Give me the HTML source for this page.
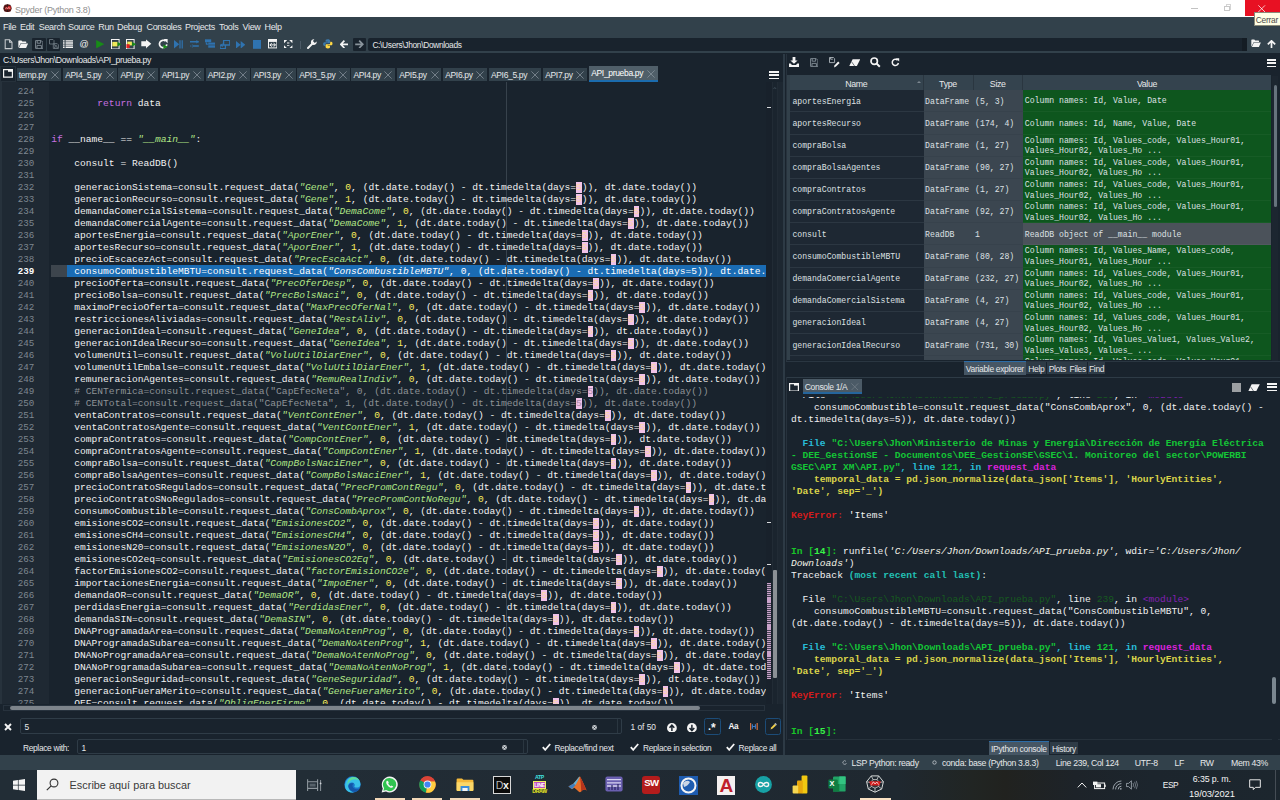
<!DOCTYPE html>
<html><head><meta charset="utf-8"><title>Spyder (Python 3.8)</title>
<style>
*{box-sizing:border-box;margin:0;padding:0}
html,body{width:1280px;height:800px;overflow:hidden;background:#19232D}
body{position:relative;font-family:"Liberation Sans",sans-serif;font-size:8.7px;letter-spacing:-.33px;color:#E0E1E3}
.abs{position:absolute}
.mono{font-family:"Liberation Mono","DejaVu Sans Mono",monospace}
#code,#lnums,.vc,#ctext{letter-spacing:0}
#title{position:absolute;left:0;top:0;width:1280px;height:17px;background:#fff}
#title .t{position:absolute;left:15px;top:3.6px;font-size:9px;color:#909090;line-height:12px;letter-spacing:-.25px}
#menubar{position:absolute;left:0;top:17px;width:1280px;height:19px;background:#32414B}
#menubar span{position:absolute;top:5px;font-size:9px;line-height:11px;color:#E6E8EA;white-space:nowrap}
#toolbar{position:absolute;left:0;top:36px;width:1280px;height:16.6px;background:#32414B}
#pathrow{position:absolute;left:0;top:52.6px;width:786px;height:13.4px;background:#19232D}
#pathrow span{position:absolute;left:3px;top:2.4px;font-size:8.7px;line-height:10px;color:#E6E8EA;white-space:nowrap}
#tabrow{position:absolute;left:0;top:66px;width:783px;height:16px;background:#19232D}
.tab{position:absolute;top:1.5px;height:13.2px;background:#32414B;font-size:8.5px;line-height:14.6px;color:#E6E8EA;white-space:nowrap;padding-left:2.2px}
.tab svg{position:absolute;right:2.6px;top:3px}
.tab.sel{top:0;height:16px;background:#505F69;border-bottom:2px solid #1B6CAE;border-right:none;line-height:15.6px}
.tab.sel svg{top:3.6px}
.tab.sel svg path{stroke:#7F8B94}
/* editor */
#editor{position:absolute;left:0;top:82px;width:783px;height:622px;background:#19232D;overflow:hidden}
#lnarea{position:absolute;left:2.4px;top:0;width:46.6px;height:622px;background:#1F2933;border-left:none}
#lstrip{position:absolute;left:0;top:0;width:2.4px;height:632px;background:#27323C}
#edge{position:absolute;left:506px;top:0;width:1px;height:622px;background:#37424C}
#curline{position:absolute;left:50.6px;top:183.2px;width:17px;height:11.4px;background:#3D454D}
#selbg{position:absolute;left:67.4px;top:183.2px;width:698.2px;height:11.4px;background:#1A6CB4}
#sflag{position:absolute;left:765.6px;top:0;width:6.4px;height:622px;background:#18212B}
#sflags{position:absolute;left:767px;top:500.5px;width:4px;height:96.5px;background:repeating-linear-gradient(#C9A2CA 0,#C9A2CA 1.15px,rgba(201,162,202,.25) 1.15px,rgba(201,162,202,.25) 1.93px)}
#vsb{position:absolute;left:772px;top:0;width:5.8px;height:622px;background:#1A242E;border-left:1px solid #212B35;border-right:1px solid #212B35}
#vgap{position:absolute;left:777.8px;top:0;width:5px;height:622px;background:#1D2731}
#vsbh{position:absolute;left:773px;top:487.5px;width:4px;height:108px;background:#8B9095;border-radius:1px}
#vsplit{position:absolute;left:782.5px;top:54px;width:2.6px;height:701.4px;background:#2D3A45}
#lnums{position:absolute;left:0;top:4px;width:34.4px;text-align:right;font-family:"Liberation Mono",monospace;font-size:9.2px;line-height:12px;color:#7E8790}
#lnums div{height:12px}
#lnums .cur{color:#fff;font-weight:bold}
#code{position:absolute;left:51.2px;top:4px;width:715px;overflow:hidden;font-family:"Liberation Mono",monospace;font-size:9.62px;line-height:12px;color:#F2F2F2;white-space:pre}
.cl{height:12px;white-space:pre}
.k{color:#C670E0}.s{color:#B0E686;font-style:italic}.n{color:#FAED5C}.c{color:#8D9296}
.f{background:#F0C2E8;color:#FAD8A4}
.c .f{color:#A88CA8}
.sel{color:#fff}
.sel .s{color:#fff}

#varexp{position:absolute;left:787px;top:54px;width:493px;height:322px;background:#19232D}
.ham{width:9.4px;height:8.6px;background:linear-gradient(#F4F4F4 0 1.7px,transparent 1.7px 3.4px,#F4F4F4 3.4px 5.1px,transparent 5.1px 6.9px,#F4F4F4 6.9px 8.6px)}
.vh{height:15.2px;background:#34434E;border-right:1px solid #2A3640;text-align:center;font-size:8.8px;line-height:18px;overflow:hidden;color:#E6E8EA}
.sortind{position:absolute;right:2px;top:6px;width:0;height:0;border-left:2px solid transparent;border-right:2px solid transparent;border-bottom:2.4px solid #7C8790}
.vr{position:absolute;left:0;width:481px;height:22.18px}
.vc{position:absolute;top:0;height:22.18px;font-family:"Liberation Mono",monospace;font-size:8.17px;line-height:22.2px;color:#DEE1E4;white-space:pre;overflow:hidden;padding-left:2.4px;padding-top:.4px}
.vn{background:#1E2833;border-bottom:1px solid #2C3742}
.vt{background:#3B4650;border-bottom:1px solid #37424C;padding-left:1.6px}
.vv{border-bottom:1px solid rgba(255,255,255,.04);padding-left:1.8px;padding-top:2px;display:flex;align-items:center}
.vv div{line-height:10.6px}
.btab{position:absolute;height:11.6px;margin-top:1.4px;background:#2E3B46;font-size:8.5px;line-height:14.2px;color:#E6E8EA;text-align:center;white-space:nowrap;overflow:hidden}
.btab.sel{height:14.4px;margin-top:0;background:#465664;border-top:1.6px solid #2B6CA8;line-height:15.4px}
#console{position:absolute;left:787px;top:378px;width:493px;height:378px;background:#19232D}
.ctab{height:15.6px;margin-top:.8px;background:#4B5A66;font-size:8.5px;line-height:16.4px;color:#E6E8EA;padding-left:2.2px;border-bottom:2px solid #25659C;overflow:hidden;white-space:nowrap}
.ctab .x{position:absolute;right:3.6px;top:0;color:#76828C;font-size:9px}
#ctext{position:absolute;left:4px;top:19.3px;width:480px;height:343.8px;overflow:hidden;font-family:"Liberation Mono",monospace;font-size:9.62px;line-height:12px;color:#F2F2F2;white-space:pre}
#ctext .cl{height:12px}
#ctext b{font-weight:bold}
.cc{color:#28BCD8}.cgr{color:#14C636}.cm{color:#DA22DA}.cy{color:#DAD44A}.cr{color:#D41C1C}.cr2{color:#B02828}
.cin{color:#18C428}.cin2{color:#38F048}
.cc2{color:#22C0B4;font-weight:bold}.dg{color:#175A20}.dm{color:#8420B4}.cg{color:#777}
#ctext i{font-style:italic;color:#F2F2E6}

#findbar{position:absolute;left:0;top:704px;width:783px;height:52px;background:#19232D}
.inp{background:#19232D;border:1px solid #2F3C47;border-radius:2px}
.inp span{position:absolute;top:2.6px;font-size:8.4px;line-height:10px;color:#E6E8EA}
.lbl{font-size:8.4px;line-height:10px;color:#E6E8EA;white-space:nowrap}
#status{position:absolute;left:0;top:755.4px;width:1280px;height:14.6px;background:#32414B}
#status span{position:absolute;top:2.4px;font-size:8.7px;letter-spacing:-.3px;line-height:10px;color:#E6E8EA;white-space:nowrap}
#taskbar{position:absolute;left:0;top:770px;width:1280px;height:30px;background:linear-gradient(90deg,#222D36 0,#222D36 25%,#202A33 48%,#1F2830 70%,#212523 76%,#21221F 78.5%,#1D2329 84%,#1C252D 90%,#1C262E 100%)}
.tk{font-size:8.8px;letter-spacing:-.12px;line-height:11px;color:#F4F4F4;white-space:nowrap}
</style></head>
<body>
<div id="title">
<svg class="abs" style="left:2.5px;top:3.8px" width="9" height="8.4" viewBox="0 0 10 10"><ellipse cx="5" cy="5" rx="4.8" ry="4.6" fill="#5E1414"/><path d="M5 .4V9.6M.4 5H9.6M1.7 1.7L8.3 8.3M8.3 1.7L1.7 8.3" stroke="#1c1c1c" stroke-width=".9"/><path d="M2 3.4H5.4V6.8H2Z" fill="#A81C1C"/><path d="M5.4 2.6H8.8V6.4H5.4Z" fill="#E02626"/><path d="M2.6 6L4 4.2L5.2 5.6L6.6 4L8 5.8" stroke="#f4dada" stroke-width=".7" fill="none"/></svg>
<span class="t">Spyder (Python 3.8)</span>
<div class="abs" style="left:1190.6px;top:8px;width:7px;height:1px;background:#C2C2C2"></div>
<div class="abs" style="left:1225.6px;top:4.4px;width:5.6px;height:5.6px;border:1px solid #D4D4D4"></div><div class="abs" style="left:1224.4px;top:5.8px;width:5.6px;height:5.6px;border:1px solid #C8C8C8;background:#fff"></div>
<div class="abs" style="left:1245px;top:0;width:35px;height:16px;background:#E81123"></div>
<svg class="abs" style="left:1258.4px;top:4.6px" width="7.4" height="7.4" viewBox="0 0 10 10"><path d="M.5 .5L9.5 9.5M9.5 .5L.5 9.5" stroke="#fff" stroke-width="1"/></svg>
</div>
<div id="menubar"><span style="left:3px">File</span><span style="left:20px">Edit</span><span style="left:38.75px">Search</span><span style="left:68px">Source</span><span style="left:98.25px">Run</span><span style="left:117px">Debug</span><span style="left:146.5px">Consoles</span><span style="left:185px">Projects</span><span style="left:219px">Tools</span><span style="left:242.5px">View</span><span style="left:264.5px">Help</span></div>
<div id="toolbar"><div class="abs" style="left:32px;top:2px;width:13.5px;height:13.4px;background:#19232D;border-radius:1px"></div><div class="abs" style="left:46.5px;top:2px;width:13.5px;height:13.4px;background:#19232D;border-radius:1px"></div><svg class="abs" style="left:3.5px;top:3.4px" width="9" height="10.4" viewBox="0 0 9 11"><path d="M1 .8H5.6L8.2 3.4V10.2H1Z M5.6 .8V3.4H8.2" fill="none" stroke="#C9CDD0" stroke-width="1.1"/></svg><svg class="abs" style="left:17.5px;top:4.2px" width="10.4" height="8.4" viewBox="0 0 11 9"><path d="M.3 8.5V1.2Q.3 .5 1 .5H3.6L4.6 1.6H8.2Q8.8 1.6 8.8 2.3V3.2H3L.3 8.5Z M3.3 3.8H10.8L8.6 8.6H.9Z" fill="#F4F4F4"/></svg><svg class="abs" style="left:34.5px;top:3.7px" width="8.5" height="9" viewBox="0 0 8.5 9"><path d="M.6 .6H6.2L7.9 2.3V8.4H.6Z M2.2 .6V3.2H5.6V.6 M2 8.4V5.4H6.4V8.4" fill="none" stroke="#7C8790" stroke-width="1"/></svg><svg class="abs" style="left:48.5px;top:3.2px" width="10" height="10" viewBox="0 0 10 10"><path d="M.5 .5H4L5 1.5V5H.5Z M4.3 4.6H8.2L9.4 5.8V9.5H4.3Z M5.6 4.6V6.4H7.8 M5.6 9.5V7.8H8.2V9.5" fill="none" stroke="#6C7780" stroke-width=".9"/></svg><svg class="abs" style="left:63px;top:4.2px" width="10.2" height="8" viewBox="0 0 10.2 8"><path d="M0 .9H1.6M2.6 .9H10.2M0 3H1.6M2.6 3H10.2M0 5.1H1.6M2.6 5.1H10.2M0 7.2H1.6M2.6 7.2H10.2" stroke="#F4F4F4" stroke-width="1.4"/></svg><span class="abs" style="left:79.6px;top:2.4px;font-size:9px;letter-spacing:0;line-height:12px;color:#F4F4F4">@</span><svg class="abs" style="left:95.5px;top:4.0px" width="8.5" height="8.4" viewBox="0 0 8.5 8.4"><path d="M.2 0L8.2 4.2L.2 8.4Z" fill="#178C17"/></svg><svg class="abs" style="left:110.8px;top:2.7px" width="11" height="10.5" viewBox="0 0 11 10.5"><rect x=".5" y=".5" width="7.6" height="9.5" fill="none" stroke="#F4F4F4" stroke-width="1"/><rect x="1.3" y="2.9" width="5.2" height="4.5" fill="#EEE85A"/><path d="M6.6 2.9L10.4 5.2L6.6 7.5Z" fill="#178C17"/></svg><svg class="abs" style="left:125.8px;top:2.7px" width="11" height="10.5" viewBox="0 0 11 10.5"><rect x=".5" y=".5" width="7.6" height="9.5" fill="none" stroke="#F4F4F4" stroke-width="1"/><rect x="1.3" y="2.6" width="4.6" height="3.8" fill="#EEE85A"/><rect x=".4" y="5.2" width="3.2" height="3.8" fill="#E02020"/><path d="M6.2 2.9L10.2 5.2L6.2 7.5Z" fill="#178C17"/></svg><svg class="abs" style="left:141.3px;top:3.2px" width="10.5" height="10" viewBox="0 0 10.5 10"><path d="M.3 2.3H5V.4L10.3 4.8L5 9.2V7.3H.3Z" fill="#F4F4F4"/><path d="M5 9.8H5.2" stroke="#ccc"/></svg><svg class="abs" style="left:157.8px;top:3.2px" width="10.5" height="10" viewBox="0 0 10.5 10"><path d="M7.6 2.2A3.7 3.7 0 1 0 8.8 5.4" fill="none" stroke="#F4F4F4" stroke-width="1.7"/><path d="M5.5 .1H9.6V4.2Z" fill="#F4F4F4"/><path d="M5.4 5.6L9.8 7.8L5.4 10Z" fill="#178C17"/></svg><svg class="abs" style="left:173.8px;top:4.2px" width="9" height="8.6" viewBox="0 0 9 8.6"><path d="M0 0L5.2 4.3L0 8.6Z M5.4 .2H6.6V8.4H5.4Z M7.6 .2H8.8V8.4H7.6Z" fill="#2F73B0"/></svg><svg class="abs" style="left:189.5px;top:4.2px" width="9" height="8" viewBox="0 0 9 8"><path d="M0 1H8.8V2.6H0Z M0 5.2H8.8V6.8H0Z M6.4 0L9 1.8L6.4 3.6Z M2.6 4.2L0 6L2.6 7.8Z" fill="#2F73B0"/></svg><svg class="abs" style="left:204.8px;top:3.2px" width="10.5" height="9.5" viewBox="0 0 10.5 9.5"><path d="M0 .4H6V3H0Z M3.4 3.8H10.4V5.6H3.4Z M3.4 6.6H10.4V8.4H3.4Z M1 3V5.6H3.4" fill="#2F73B0" stroke="#2F73B0" stroke-width=".4"/></svg><svg class="abs" style="left:220px;top:3.8px" width="10" height="9" viewBox="0 0 10 9"><path d="M3.6 .4H9.8V5H3.6Z M0 5.2H5.4V8.6H0Z" fill="none" stroke="#2F73B0" stroke-width="1.3"/><path d="M2.6 3.2L.2 5.2L2.6 7.2Z" fill="#2F73B0"/></svg><svg class="abs" style="left:236px;top:4.6px" width="9.4" height="7.6" viewBox="0 0 9.4 7.6"><path d="M0 0L4.6 3.8L0 7.6Z M4.7 0L9.3 3.8L4.7 7.6Z" fill="#2F73B0"/></svg><svg class="abs" style="left:252.6px;top:3.8px" width="8.6" height="8.8" viewBox="0 0 8.6 8.8"><rect x="0" y="0" width="8.6" height="8.8" fill="#2F73B0"/></svg><svg class="abs" style="left:268px;top:3.4px" width="9.4" height="9.4" viewBox="0 0 9.4 9.4"><rect x=".5" y=".5" width="8.4" height="8.4" fill="none" stroke="#F4F4F4" stroke-width="1"/><rect x=".5" y=".5" width="8.4" height="2.4" fill="#F4F4F4"/><path d="M2 5.9H7.4M5.6 4.2L7.6 5.9L5.6 7.6M3.8 4.2L1.8 5.9L3.8 7.6" stroke="#F4F4F4" stroke-width="1" fill="none"/></svg><svg class="abs" style="left:284.4px;top:3.8px" width="8.4" height="8.4" viewBox="0 0 8.4 8.4"><path d="M0 0H3.2L0 3.2Z M8.4 0V3.2L5.2 0Z M0 8.4V5.2L3.2 8.4Z M8.4 8.4H5.2L8.4 5.2Z M3 2.6H5.4V3.4H3Z M3 5H5.4V5.8H3Z" fill="#F4F4F4"/></svg><div class="abs" style="left:300px;top:5px;width:1px;height:8px;background:#4C5A66"></div><svg class="abs" style="left:307.4px;top:3.2px" width="10" height="10" viewBox="0 0 10 10"><path d="M1 9L6 4" stroke="#F4F4F4" stroke-width="2" stroke-linecap="round"/><path d="M9.6 2.4A2.9 2.9 0 1 1 7.4 .3L5.9 2L7.8 4L9.6 2.4Z" fill="#F4F4F4"/></svg><svg class="abs" style="left:323px;top:3.2px" width="9.6" height="9.6" viewBox="0 0 9.6 9.6"><path d="M4.7 .2C2.8 .2 2.6 1 2.6 1.6V2.8H4.9V3.3H1.4C.5 3.3 .1 4.2 .1 5.1C.1 6.1 .5 6.9 1.4 6.9H2.4V5.6C2.4 4.8 3 4.3 3.8 4.3H6C6.6 4.3 7 3.8 7 3.2V1.6C7 .8 6.3 .2 4.7 .2Z" fill="#3C78AA"/><path d="M4.9 9.4C6.8 9.4 7 8.6 7 8V6.8H4.7V6.3H8.2C9.1 6.3 9.5 5.4 9.5 4.5C9.5 3.5 9.1 2.7 8.2 2.7H7.2V4C7.2 4.8 6.6 5.3 5.8 5.3H3.6C3 5.3 2.6 5.8 2.6 6.4V8C2.6 8.8 3.3 9.4 4.9 9.4Z" fill="#FFD845"/></svg><svg class="abs" style="left:339.8px;top:3.8px" width="8.6" height="8.6" viewBox="0 0 8.6 8.6"><path d="M4.4 .6L.8 4.3L4.4 8M1 4.3H8.4" stroke="#F4F4F4" stroke-width="1.7" fill="none"/></svg><div class="abs" style="left:352.5px;top:2px;width:13.5px;height:13.4px;background:#19232D;border-radius:1px"></div><svg class="abs" style="left:355px;top:3.8px" width="8.6" height="8.6" viewBox="0 0 8.6 8.6"><path d="M4.2 .6L7.8 4.3L4.2 8M7.6 4.3H.2" stroke="#8A949C" stroke-width="1.7" fill="none"/></svg><div class="abs" style="left:367.5px;top:1.5px;width:879.5px;height:13.8px;background:#19232D;border-radius:2px"></div><div class="abs" style="left:1242px;top:2px;width:5px;height:13px;background:#141C24"></div><span class="abs" style="left:372.4px;top:3.6px;font-size:8.4px;line-height:10px;color:#E6E8EA;white-space:nowrap">C:\Users\Jhon\Downloads</span><svg class="abs" style="left:1250.5px;top:3.4px" width="10" height="8.2" viewBox="0 0 10 8.2"><path d="M.3 7.8V1.1Q.3 .4 1 .4H3.3L4.2 1.4H7.4Q8 1.4 8 2.1V2.9H2.8L.3 7.8Z M3 3.5H9.9L7.9 7.9H.8Z" fill="#F4F4F4"/></svg><svg class="abs" style="left:1267px;top:3.8px" width="9" height="8.4" viewBox="0 0 9 8.4"><path d="M.8 4.4L4.5 .8L8.2 4.4M4.5 1V8.4" stroke="#F4F4F4" stroke-width="1.7" fill="none"/></svg></div>
<div id="pathrow"><span>C:\Users\Jhon\Downloads\API_prueba.py</span></div>
<div id="tabrow"><div class="abs" style="left:0;top:0;width:16.4px;height:15.6px;background:#19232D;border:1px solid #26313B"></div><svg class="abs" style="left:3px;top:3.4px" width="10" height="9" viewBox="0 0 10 9"><path d="M.6 .6H9.4V8.2H.6Z" fill="none" stroke="#F4F4F4" stroke-width="1.2"/><path d="M5 .6H9.4V2.8H5Z" fill="#F4F4F4"/></svg><div class="tab" style="left:16.50px;width:44.75px">temp.py<svg width="8" height="8" viewBox="0 0 8 8"><path d="M.4 .4L7.6 7.6M7.6 .4L.4 7.6" stroke="#7A8690" stroke-width=".9"/></svg></div><div class="tab" style="left:63.00px;width:53.50px">API4_5.py<svg width="8" height="8" viewBox="0 0 8 8"><path d="M.4 .4L7.6 7.6M7.6 .4L.4 7.6" stroke="#7A8690" stroke-width=".9"/></svg></div><div class="tab" style="left:118.25px;width:39.75px">API.py<svg width="8" height="8" viewBox="0 0 8 8"><path d="M.4 .4L7.6 7.6M7.6 .4L.4 7.6" stroke="#7A8690" stroke-width=".9"/></svg></div><div class="tab" style="left:159.50px;width:44.25px">API1.py<svg width="8" height="8" viewBox="0 0 8 8"><path d="M.4 .4L7.6 7.6M7.6 .4L.4 7.6" stroke="#7A8690" stroke-width=".9"/></svg></div><div class="tab" style="left:205.50px;width:44.00px">API2.py<svg width="8" height="8" viewBox="0 0 8 8"><path d="M.4 .4L7.6 7.6M7.6 .4L.4 7.6" stroke="#7A8690" stroke-width=".9"/></svg></div><div class="tab" style="left:251.25px;width:44.25px">API3.py<svg width="8" height="8" viewBox="0 0 8 8"><path d="M.4 .4L7.6 7.6M7.6 .4L.4 7.6" stroke="#7A8690" stroke-width=".9"/></svg></div><div class="tab" style="left:297.00px;width:52.50px">API3_5.py<svg width="8" height="8" viewBox="0 0 8 8"><path d="M.4 .4L7.6 7.6M7.6 .4L.4 7.6" stroke="#7A8690" stroke-width=".9"/></svg></div><div class="tab" style="left:351.25px;width:43.75px">API4.py<svg width="8" height="8" viewBox="0 0 8 8"><path d="M.4 .4L7.6 7.6M7.6 .4L.4 7.6" stroke="#7A8690" stroke-width=".9"/></svg></div><div class="tab" style="left:397.00px;width:44.25px">API5.py<svg width="8" height="8" viewBox="0 0 8 8"><path d="M.4 .4L7.6 7.6M7.6 .4L.4 7.6" stroke="#7A8690" stroke-width=".9"/></svg></div><div class="tab" style="left:443.00px;width:44.00px">API6.py<svg width="8" height="8" viewBox="0 0 8 8"><path d="M.4 .4L7.6 7.6M7.6 .4L.4 7.6" stroke="#7A8690" stroke-width=".9"/></svg></div><div class="tab" style="left:488.75px;width:52.50px">API6_5.py<svg width="8" height="8" viewBox="0 0 8 8"><path d="M.4 .4L7.6 7.6M7.6 .4L.4 7.6" stroke="#7A8690" stroke-width=".9"/></svg></div><div class="tab" style="left:543.00px;width:44.00px">API7.py<svg width="8" height="8" viewBox="0 0 8 8"><path d="M.4 .4L7.6 7.6M7.6 .4L.4 7.6" stroke="#7A8690" stroke-width=".9"/></svg></div><div class="tab sel" style="left:589.00px;width:69.00px">API_prueba.py<svg width="8" height="8" viewBox="0 0 8 8"><path d="M.4 .4L7.6 7.6M7.6 .4L.4 7.6" stroke="#7A8690" stroke-width=".9"/></svg></div><div class="abs ham" style="left:769px;top:4.6px;width:10px"></div></div>
<div id="editor"><div id="lnarea"></div><div id="lstrip"></div>
<div id="curline"></div><div id="selbg"></div><div id="edge"></div>
<div id="sflag"></div>
<div class="abs" style="left:767px;top:25px;width:3.6px;height:1.2px;background:#D8DADC"></div>
<div class="abs" style="left:767px;top:481.8px;width:3.6px;height:1.2px;background:#D8DADC"></div>
<div class="abs" style="left:767px;top:440px;width:3.6px;height:1.2px;background:#D8DADC"></div>
<div id="sflags"></div>
<div id="vsb"></div><div id="vgap"></div><div id="vsbh"></div>
<svg class="abs" style="left:773.4px;top:4.6px" width="3.6" height="2.6" viewBox="0 0 3.6 2.6"><path d="M.2 2.4L1.8 .4L3.4 2.4" stroke="#4A5863" stroke-width=".7" fill="none"/></svg>
<div id="lnums"><div>224</div><div>225</div><div>226</div><div>227</div><div>228</div><div>229</div><div>230</div><div>231</div><div>232</div><div>233</div><div>234</div><div>235</div><div>236</div><div>237</div><div>238</div><div class="cur">239</div><div>240</div><div>241</div><div>242</div><div>243</div><div>244</div><div>245</div><div>246</div><div>247</div><div>248</div><div>249</div><div>250</div><div>251</div><div>252</div><div>253</div><div>254</div><div>255</div><div>256</div><div>257</div><div>258</div><div>259</div><div>260</div><div>261</div><div>262</div><div>263</div><div>264</div><div>265</div><div>266</div><div>267</div><div>268</div><div>269</div><div>270</div><div>271</div><div>272</div><div>273</div><div>274</div><div>275</div></div>
<div id="code"><div class="cl"></div><div class="cl">        <span class="k">return</span> data</div><div class="cl"></div><div class="cl"></div><div class="cl"><span class="k">if</span> __name__ == <span class="s">"__main__"</span>:</div><div class="cl"></div><div class="cl">    consult = ReadDB()</div><div class="cl"></div><div class="cl">    generacionSistema=consult.request_data(<span class="s">"Gene"</span>, <span class="n">0</span>, (dt.date.today() - dt.timedelta(days=<span class="f">5</span>)), dt.date.today())</div><div class="cl">    generacionRecurso=consult.request_data(<span class="s">"Gene"</span>, <span class="n">1</span>, (dt.date.today() - dt.timedelta(days=<span class="f">5</span>)), dt.date.today())</div><div class="cl">    demandaComercialSistema=consult.request_data(<span class="s">"DemaCome"</span>, <span class="n">0</span>, (dt.date.today() - dt.timedelta(days=<span class="f">5</span>)), dt.date.today())</div><div class="cl">    demandaComercialAgente=consult.request_data(<span class="s">"DemaCome"</span>, <span class="n">1</span>, (dt.date.today() - dt.timedelta(days=<span class="f">5</span>)), dt.date.today())</div><div class="cl">    aportesEnergia=consult.request_data(<span class="s">"AporEner"</span>, <span class="n">0</span>, (dt.date.today() - dt.timedelta(days=<span class="f">5</span>)), dt.date.today())</div><div class="cl">    aportesRecurso=consult.request_data(<span class="s">"AporEner"</span>, <span class="n">1</span>, (dt.date.today() - dt.timedelta(days=<span class="f">5</span>)), dt.date.today())</div><div class="cl">    precioEscacezAct=consult.request_data(<span class="s">"PrecEscaAct"</span>, <span class="n">0</span>, (dt.date.today() - dt.timedelta(days=<span class="f">5</span>)), dt.date.today())</div><div class="cl">   <span class="sel"> consumoCombustibleMBTU=consult.request_data(<span class="s">"ConsCombustibleMBTU"</span>, 0, (dt.date.today() - dt.timedelta(days=5)), dt.date.today())</span></div><div class="cl">    precioOferta=consult.request_data(<span class="s">"PrecOferDesp"</span>, <span class="n">0</span>, (dt.date.today() - dt.timedelta(days=<span class="f">5</span>)), dt.date.today())</div><div class="cl">    precioBolsa=consult.request_data(<span class="s">"PrecBolsNaci"</span>, <span class="n">0</span>, (dt.date.today() - dt.timedelta(days=<span class="f">5</span>)), dt.date.today())</div><div class="cl">    maximoPrecioOferta=consult.request_data(<span class="s">"MaxPrecOferNal"</span>, <span class="n">0</span>, (dt.date.today() - dt.timedelta(days=<span class="f">5</span>)), dt.date.today())</div><div class="cl">    restriccionesAliviadas=consult.request_data(<span class="s">"RestAliv"</span>, <span class="n">0</span>, (dt.date.today() - dt.timedelta(days=<span class="f">5</span>)), dt.date.today())</div><div class="cl">    generacionIdeal=consult.request_data(<span class="s">"GeneIdea"</span>, <span class="n">0</span>, (dt.date.today() - dt.timedelta(days=<span class="f">5</span>)), dt.date.today())</div><div class="cl">    generacionIdealRecurso=consult.request_data(<span class="s">"GeneIdea"</span>, <span class="n">1</span>, (dt.date.today() - dt.timedelta(days=<span class="f">5</span>)), dt.date.today())</div><div class="cl">    volumenUtil=consult.request_data(<span class="s">"VoluUtilDiarEner"</span>, <span class="n">0</span>, (dt.date.today() - dt.timedelta(days=<span class="f">5</span>)), dt.date.today())</div><div class="cl">    volumenUtilEmbalse=consult.request_data(<span class="s">"VoluUtilDiarEner"</span>, <span class="n">1</span>, (dt.date.today() - dt.timedelta(days=<span class="f">5</span>)), dt.date.today())</div><div class="cl">    remuneracionAgentes=consult.request_data(<span class="s">"RemuRealIndiv"</span>, <span class="n">0</span>, (dt.date.today() - dt.timedelta(days=<span class="f">5</span>)), dt.date.today())</div><div class="cl">    <span class="c"># CENTermica=consult.request_data("CapEfecNeta", 0, (dt.date.today() - dt.timedelta(days=<span class="f">5</span>)), dt.date.today())</span></div><div class="cl">    <span class="c"># CENTotal=consult.request_data("CapEfecNeta", 1, (dt.date.today() - dt.timedelta(days=<span class="f">5</span>)), dt.date.today())</span></div><div class="cl">    ventaContratos=consult.request_data(<span class="s">"VentContEner"</span>, <span class="n">0</span>, (dt.date.today() - dt.timedelta(days=<span class="f">5</span>)), dt.date.today())</div><div class="cl">    ventaContratosAgente=consult.request_data(<span class="s">"VentContEner"</span>, <span class="n">1</span>, (dt.date.today() - dt.timedelta(days=<span class="f">5</span>)), dt.date.today())</div><div class="cl">    compraContratos=consult.request_data(<span class="s">"CompContEner"</span>, <span class="n">0</span>, (dt.date.today() - dt.timedelta(days=<span class="f">5</span>)), dt.date.today())</div><div class="cl">    compraContratosAgente=consult.request_data(<span class="s">"CompContEner"</span>, <span class="n">1</span>, (dt.date.today() - dt.timedelta(days=<span class="f">5</span>)), dt.date.today())</div><div class="cl">    compraBolsa=consult.request_data(<span class="s">"CompBolsNaciEner"</span>, <span class="n">0</span>, (dt.date.today() - dt.timedelta(days=<span class="f">5</span>)), dt.date.today())</div><div class="cl">    compraBolsaAgentes=consult.request_data(<span class="s">"CompBolsNaciEner"</span>, <span class="n">1</span>, (dt.date.today() - dt.timedelta(days=<span class="f">5</span>)), dt.date.today())</div><div class="cl">    precioContratoSRegulados=consult.request_data(<span class="s">"PrecPromContRegu"</span>, <span class="n">0</span>, (dt.date.today() - dt.timedelta(days=<span class="f">5</span>)), dt.date.today())</div><div class="cl">    precioContratoSNoRegulados=consult.request_data(<span class="s">"PrecPromContNoRegu"</span>, <span class="n">0</span>, (dt.date.today() - dt.timedelta(days=<span class="f">5</span>)), dt.date.today())</div><div class="cl">    consumoCombustible=consult.request_data(<span class="s">"ConsCombAprox"</span>, <span class="n">0</span>, (dt.date.today() - dt.timedelta(days=<span class="f">5</span>)), dt.date.today())</div><div class="cl">    emisionesCO2=consult.request_data(<span class="s">"EmisionesCO2"</span>, <span class="n">0</span>, (dt.date.today() - dt.timedelta(days=<span class="f">5</span>)), dt.date.today())</div><div class="cl">    emisionesCH4=consult.request_data(<span class="s">"EmisionesCH4"</span>, <span class="n">0</span>, (dt.date.today() - dt.timedelta(days=<span class="f">5</span>)), dt.date.today())</div><div class="cl">    emisionesN20=consult.request_data(<span class="s">"EmisionesN2O"</span>, <span class="n">0</span>, (dt.date.today() - dt.timedelta(days=<span class="f">5</span>)), dt.date.today())</div><div class="cl">    emisionesCO2eq=consult.request_data(<span class="s">"EmisionesCO2Eq"</span>, <span class="n">0</span>, (dt.date.today() - dt.timedelta(days=<span class="f">5</span>)), dt.date.today())</div><div class="cl">    factorEmisionesCO2=consult.request_data(<span class="s">"factorEmisionCO2e"</span>, <span class="n">0</span>, (dt.date.today() - dt.timedelta(days=<span class="f">5</span>)), dt.date.today())</div><div class="cl">    importacionesEnergia=consult.request_data(<span class="s">"ImpoEner"</span>, <span class="n">0</span>, (dt.date.today() - dt.timedelta(days=<span class="f">5</span>)), dt.date.today())</div><div class="cl">    demandaOR=consult.request_data(<span class="s">"DemaOR"</span>, <span class="n">0</span>, (dt.date.today() - dt.timedelta(days=<span class="f">5</span>)), dt.date.today())</div><div class="cl">    perdidasEnergia=consult.request_data(<span class="s">"PerdidasEner"</span>, <span class="n">0</span>, (dt.date.today() - dt.timedelta(days=<span class="f">5</span>)), dt.date.today())</div><div class="cl">    demandaSIN=consult.request_data(<span class="s">"DemaSIN"</span>, <span class="n">0</span>, (dt.date.today() - dt.timedelta(days=<span class="f">5</span>)), dt.date.today())</div><div class="cl">    DNAProgramadaArea=consult.request_data(<span class="s">"DemaNoAtenProg"</span>, <span class="n">0</span>, (dt.date.today() - dt.timedelta(days=<span class="f">5</span>)), dt.date.today())</div><div class="cl">    DNAProgramadaSubarea=consult.request_data(<span class="s">"DemaNoAtenProg"</span>, <span class="n">1</span>, (dt.date.today() - dt.timedelta(days=<span class="f">5</span>)), dt.date.today())</div><div class="cl">    DNANoProgramadaArea=consult.request_data(<span class="s">"DemaNoAtenNoProg"</span>, <span class="n">0</span>, (dt.date.today() - dt.timedelta(days=<span class="f">5</span>)), dt.date.today())</div><div class="cl">    DNANoProgramadaSubarea=consult.request_data(<span class="s">"DemaNoAtenNoProg"</span>, <span class="n">1</span>, (dt.date.today() - dt.timedelta(days=<span class="f">5</span>)), dt.date.today())</div><div class="cl">    generacionSeguridad=consult.request_data(<span class="s">"GeneSeguridad"</span>, <span class="n">0</span>, (dt.date.today() - dt.timedelta(days=<span class="f">5</span>)), dt.date.today())</div><div class="cl">    generacionFueraMerito=consult.request_data(<span class="s">"GeneFueraMerito"</span>, <span class="n">0</span>, (dt.date.today() - dt.timedelta(days=<span class="f">5</span>)), dt.date.today())</div><div class="cl">    OEF=consult.request_data(<span class="s">"ObligEnerFirme"</span>, <span class="n">0</span>, (dt.date.today() - dt.timedelta(days=<span class="f">5</span>)), dt.date.today())</div></div></div>
<div id="vsplit"></div>
<div id="findbar"><div class="abs" style="left:3px;top:1px;width:762px;height:5.6px;background:#19232D;border:1px solid #27323D"></div><div class="abs" style="left:10px;top:2px;width:690px;height:3.6px;background:#7D848B;border-radius:2px"></div><svg class="abs" style="left:4.4px;top:19px" width="8" height="8" viewBox="0 0 8 8"><path d="M1 1L7 7M7 1L1 7" stroke="#F4F4F4" stroke-width="1.9"/></svg><div class="abs inp" style="left:20px;top:14.4px;width:602px;height:15.4px"><span style="left:3.4px">5</span></div><div class="abs" style="left:616.6px;top:15.4px;width:1px;height:13.4px;background:#2A3640"></div><svg class="abs" style="left:591.5px;top:20.6px" width="5" height="5" viewBox="0 0 5 5"><circle cx="2.5" cy="2.5" r="2.4" fill="#C8CCD0"/><path d="M1.5 1.5L3.5 3.5M3.5 1.5L1.5 3.5" stroke="#19232D" stroke-width=".7"/></svg><span class="abs lbl" style="left:630.4px;top:18px;letter-spacing:0">1 of 50</span><svg class="abs" style="left:667px;top:18.6px" width="9.8" height="9.8" viewBox="0 0 9.8 9.8"><circle cx="4.9" cy="4.9" r="4.9" fill="#F4F4F4"/><path d="M4.9 8V2.4M2.5 4.7L4.9 2.2L7.3 4.7" stroke="#19232D" stroke-width="1.5" fill="none"/></svg><svg class="abs" style="left:687.2px;top:18.6px" width="9.8" height="9.8" viewBox="0 0 9.8 9.8"><circle cx="4.9" cy="4.9" r="4.9" fill="#F4F4F4"/><path d="M4.9 1.8V7.4M2.5 5.1L4.9 7.6L7.3 5.1" stroke="#19232D" stroke-width="1.5" fill="none"/></svg><div class="abs" style="left:704px;top:14.4px;width:17px;height:16.4px;border:1px solid #1C4C78;border-radius:2.5px;background:#19232D"></div><span class="abs" style="left:708px;top:17.4px;font-size:11px;line-height:10px;color:#F4F4F4;font-weight:bold">.</span><span class="abs" style="left:711px;top:18.2px;font-size:12px;line-height:12px;color:#F4F4F4;font-weight:bold">*</span><span class="abs" style="left:728.4px;top:18.4px;font-size:8.2px;line-height:10px;color:#F4F4F4;font-weight:bold;letter-spacing:-.2px">Aa</span><svg class="abs" style="left:749.8px;top:19.4px" width="7.8" height="7" viewBox="0 0 7.8 7"><path d="M.6 0V7M7.2 0V7" stroke="#D07040" stroke-width="1.2"/><path d="M2.4 1.2V5.8M5.4 1.2V5.8M2.4 3.5H5.4" stroke="#3C7CC8" stroke-width="1.1" fill="none"/></svg><div class="abs" style="left:765.4px;top:14.4px;width:16px;height:16.4px;border:1px solid #1C4C78;border-radius:2.5px;background:#19232D"></div><svg class="abs" style="left:770px;top:19.4px" width="6.8" height="6.8" viewBox="0 0 8 8"><path d="M.6 7.6L1.6 5L5.4 1.2L7 2.8L3.2 6.6Z" fill="#F2D04A"/><path d="M5.2 .8L6.4 0L8 1.6L7.2 2.8Z" fill="#C8CCD0"/></svg><span class="abs lbl" style="left:23px;top:38.6px">Replace with:</span><div class="abs inp" style="left:77px;top:35px;width:451px;height:15px"><span style="left:3.6px">1</span></div><div class="abs" style="left:522.6px;top:36px;width:1px;height:13px;background:#2A3640"></div><svg class="abs" style="left:501.6px;top:41px" width="5" height="5" viewBox="0 0 5 5"><circle cx="2.5" cy="2.5" r="2.4" fill="#C8CCD0"/><path d="M1.5 1.5L3.5 3.5M3.5 1.5L1.5 3.5" stroke="#19232D" stroke-width=".7"/></svg><svg class="abs" style="left:541.6px;top:39.4px" width="9" height="8" viewBox="0 0 9 8"><path d="M.8 4.2L3.2 6.8L8.2 1" stroke="#F4F4F4" stroke-width="1.8" fill="none"/></svg><span class="abs lbl" style="left:554.4px;top:38.6px">Replace/find next</span><svg class="abs" style="left:629.8px;top:39.4px" width="9" height="8" viewBox="0 0 9 8"><path d="M.8 4.2L3.2 6.8L8.2 1" stroke="#F4F4F4" stroke-width="1.8" fill="none"/></svg><span class="abs lbl" style="left:643px;top:38.6px">Replace in selection</span><svg class="abs" style="left:725.8px;top:39.4px" width="9" height="8" viewBox="0 0 9 8"><path d="M.8 4.2L3.2 6.8L8.2 1" stroke="#F4F4F4" stroke-width="1.8" fill="none"/></svg><span class="abs lbl" style="left:738.6px;top:38.6px">Replace all</span></div>
<div id="varexp"><div class="abs" style="left:-1px;top:0;width:1px;height:308px;background:#27323D"></div><div class="abs" style="left:-1px;top:307px;width:494px;height:1px;background:#2A3641"></div><svg class="abs" style="left:1.5px;top:3.4px" width="10" height="10" viewBox="0 0 10 10"><path d="M3.6 0H6.4V3.4H8.6L5 6.8L1.4 3.4H3.6Z M0 6.6H1.6L3 8H7L8.4 6.6H10V10H0Z" fill="#F4F4F4"/></svg><svg class="abs" style="left:22.6px;top:3.9px" width="8.5" height="9" viewBox="0 0 8.5 9"><path d="M.6 .6H6.2L7.9 2.3V8.4H.6Z M2.2 .6V3.2H5.6V.6 M2 8.4V5.4H6.4V8.4" fill="none" stroke="#7C8790" stroke-width="1"/></svg><svg class="abs" style="left:41.5px;top:2.5px" width="11" height="11" viewBox="0 0 11 11"><path d="M.5 .5H4.4L5.6 1.7V5.6H.5Z M1.6 .5V2.2H3.8" fill="none" stroke="#AEB5BB" stroke-width=".9"/><path d="M5 10.4L5.6 8.2L9.2 4.6L10.6 6L7 9.6Z" fill="#F4F4F4"/></svg><svg class="abs" style="left:61.5px;top:4.9px" width="11.5" height="7.5" viewBox="0 0 11.5 7.5"><path d="M3.6 .2H11.3L7.8 7.2H.2Z" fill="#F4F4F4"/><path d="M2.6 2.8L5.6 7" stroke="#19232D" stroke-width=".6"/></svg><svg class="abs" style="left:83.4px;top:3.3px" width="10.5" height="10.5" viewBox="0 0 10.5 10.5"><circle cx="4.2" cy="4.2" r="3.2" fill="none" stroke="#F4F4F4" stroke-width="1.7"/><path d="M6.4 6.4L9.8 9.8" stroke="#F4F4F4" stroke-width="2"/></svg><svg class="abs" style="left:104.2px;top:4.1px" width="8.4" height="8.6" viewBox="0 0 8.4 8.6"><path d="M6.6 2.2A3.1 3.1 0 1 0 7.4 5" fill="none" stroke="#F4F4F4" stroke-width="1.5"/><path d="M4.8 .2H8.2V3.6Z" fill="#F4F4F4"/></svg><div class="abs ham" style="left:480px;top:4.6px"></div><div class="abs" style="left:0;top:21px;width:3.4px;height:284.6px;background:#32404A"></div><div class="abs vh" style="left:3px;top:21px;width:133.5px">Name<i class="sortind"></i></div><div class="abs vh" style="left:136.5px;top:21px;width:50px">Type</div><div class="abs vh" style="left:186.5px;top:21px;width:49.5px">Size</div><div class="abs vh" style="left:236px;top:21px;width:248px;border-right:none">Value</div><div class="abs" id="vrows" style="left:3px;top:36.2px;width:481px;height:269.6px;overflow:hidden"><div class="vr" style="top:0.00px"><div class="vc vn" style="left:0;width:133.5px">aportesEnergia</div><div class="vc vt" style="left:133.5px;width:50px">DataFrame</div><div class="vc vt" style="left:183.5px;width:49.5px">(5, 3)</div><div class="vc vv" style="left:233px;width:248px;background:#0E561E"><div>Column names: Id, Value, Date</div></div></div><div class="vr" style="top:22.18px"><div class="vc vn" style="left:0;width:133.5px">aportesRecurso</div><div class="vc vt" style="left:133.5px;width:50px">DataFrame</div><div class="vc vt" style="left:183.5px;width:49.5px">(174, 4)</div><div class="vc vv" style="left:233px;width:248px;background:#0E561E"><div>Column names: Id, Name, Value, Date</div></div></div><div class="vr" style="top:44.36px"><div class="vc vn" style="left:0;width:133.5px">compraBolsa</div><div class="vc vt" style="left:133.5px;width:50px">DataFrame</div><div class="vc vt" style="left:183.5px;width:49.5px">(1, 27)</div><div class="vc vv" style="left:233px;width:248px;background:#0E561E"><div>Column names: Id, Values_code, Values_Hour01,<br>Values_Hour02, Values_Ho ...</div></div></div><div class="vr" style="top:66.54px"><div class="vc vn" style="left:0;width:133.5px">compraBolsaAgentes</div><div class="vc vt" style="left:133.5px;width:50px">DataFrame</div><div class="vc vt" style="left:183.5px;width:49.5px">(90, 27)</div><div class="vc vv" style="left:233px;width:248px;background:#0E561E"><div>Column names: Id, Values_code, Values_Hour01,<br>Values_Hour02, Values_Ho ...</div></div></div><div class="vr" style="top:88.72px"><div class="vc vn" style="left:0;width:133.5px">compraContratos</div><div class="vc vt" style="left:133.5px;width:50px">DataFrame</div><div class="vc vt" style="left:183.5px;width:49.5px">(1, 27)</div><div class="vc vv" style="left:233px;width:248px;background:#0E561E"><div>Column names: Id, Values_code, Values_Hour01,<br>Values_Hour02, Values_Ho ...</div></div></div><div class="vr" style="top:110.90px"><div class="vc vn" style="left:0;width:133.5px">compraContratosAgente</div><div class="vc vt" style="left:133.5px;width:50px">DataFrame</div><div class="vc vt" style="left:183.5px;width:49.5px">(92, 27)</div><div class="vc vv" style="left:233px;width:248px;background:#0E561E"><div>Column names: Id, Values_code, Values_Hour01,<br>Values_Hour02, Values_Ho ...</div></div></div><div class="vr" style="top:133.08px"><div class="vc vn" style="left:0;width:133.5px">consult</div><div class="vc vt" style="left:133.5px;width:50px">ReadDB</div><div class="vc vt" style="left:183.5px;width:49.5px">1</div><div class="vc vv" style="left:233px;width:248px;background:#4B525A"><div>ReadDB object of __main__ module</div></div></div><div class="vr" style="top:155.26px"><div class="vc vn" style="left:0;width:133.5px">consumoCombustibleMBTU</div><div class="vc vt" style="left:133.5px;width:50px">DataFrame</div><div class="vc vt" style="left:183.5px;width:49.5px">(80, 28)</div><div class="vc vv" style="left:233px;width:248px;background:#0E561E"><div>Column names: Id, Values_Name, Values_code,<br>Values_Hour01, Values_Hour ...</div></div></div><div class="vr" style="top:177.44px"><div class="vc vn" style="left:0;width:133.5px">demandaComercialAgente</div><div class="vc vt" style="left:133.5px;width:50px">DataFrame</div><div class="vc vt" style="left:183.5px;width:49.5px">(232, 27)</div><div class="vc vv" style="left:233px;width:248px;background:#0E561E"><div>Column names: Id, Values_code, Values_Hour01,<br>Values_Hour02, Values_Ho ...</div></div></div><div class="vr" style="top:199.62px"><div class="vc vn" style="left:0;width:133.5px">demandaComercialSistema</div><div class="vc vt" style="left:133.5px;width:50px">DataFrame</div><div class="vc vt" style="left:183.5px;width:49.5px">(4, 27)</div><div class="vc vv" style="left:233px;width:248px;background:#0E561E"><div>Column names: Id, Values_code, Values_Hour01,<br>Values_Hour02, Values_Ho ...</div></div></div><div class="vr" style="top:221.80px"><div class="vc vn" style="left:0;width:133.5px">generacionIdeal</div><div class="vc vt" style="left:133.5px;width:50px">DataFrame</div><div class="vc vt" style="left:183.5px;width:49.5px">(4, 27)</div><div class="vc vv" style="left:233px;width:248px;background:#0E561E"><div>Column names: Id, Values_code, Values_Hour01,<br>Values_Hour02, Values_Ho ...</div></div></div><div class="vr" style="top:243.98px"><div class="vc vn" style="left:0;width:133.5px">generacionIdealRecurso</div><div class="vc vt" style="left:133.5px;width:50px">DataFrame</div><div class="vc vt" style="left:183.5px;width:49.5px">(731, 30)</div><div class="vc vv" style="left:233px;width:248px;background:#0E561E"><div>Column names: Id, Values_Value1, Values_Value2,<br>Values_Value3, Values_ ...</div></div></div><div class="vr" style="top:266.16px"><div class="vc vn" style="left:0;width:133.5px">generacionRecurso</div><div class="vc vt" style="left:133.5px;width:50px">DataFrame</div><div class="vc vt" style="left:183.5px;width:49.5px">(731, 27)</div><div class="vc vv" style="left:233px;width:248px;background:#0E561E"><div>Column names: Id, Values_code, Values_Hour01,<br>Values_Hour02, Values_Ho ...</div></div></div></div><div class="abs" style="left:485.4px;top:21.5px;width:6px;height:285px;background:#1C2630"></div><div class="abs" style="left:486.6px;top:31px;width:3.6px;height:121.6px;background:#66737D;border-radius:2px"></div><div class="btab sel" style="left:177.2px;top:307px;width:61.4px">Variable explorer</div><div class="btab" style="left:239.4px;top:307px;width:19.8px">Help</div><div class="btab" style="left:260.0px;top:307px;width:20.6px">Plots</div><div class="btab" style="left:281.4px;top:307px;width:18.6px">Files</div><div class="btab" style="left:300.8px;top:307px;width:17.6px">Find</div></div>
<div id="console"><div class="abs" style="left:-1px;top:-1px;width:494px;height:1px;background:#2E3B46"></div><div class="abs" style="left:-1px;top:-1px;width:1px;height:363px;background:#27323D"></div><div class="abs" style="left:1px;top:361px;width:492px;height:1px;background:#26313B"></div><svg class="abs" style="left:2px;top:4.8px" width="10" height="8.6" viewBox="0 0 10 8.6"><path d="M.6 .6H9.4V8H.6Z" fill="none" stroke="#F4F4F4" stroke-width="1.2"/><path d="M5 .6H9.4V2.6H5Z" fill="#F4F4F4"/></svg><div class="abs ctab" style="left:15.6px;top:0;width:59.6px">Console 1/A<svg class="abs" style="right:3.6px;top:4px" width="7.6" height="7.6" viewBox="0 0 8 8"><path d="M.4 .4L7.6 7.6M7.6 .4L.4 7.6" stroke="#6E7A84" stroke-width=".9"/></svg></div><div class="abs" style="left:445px;top:4.6px;width:9.4px;height:9.4px;background:#9C9FA2"></div><svg class="abs" style="left:461px;top:5.6px" width="12" height="7.6" viewBox="0 0 12 7.6"><path d="M3.6 .2H11.8L8.2 7.4H.2Z" fill="#F4F4F4"/><path d="M2.6 2.8L5.6 7.2" stroke="#19232D" stroke-width=".6"/></svg><div class="abs ham" style="left:480.2px;top:5.4px;height:8px;transform-origin:0 0"></div><div id="ctext"><div style="margin-top:-7.4px"><div class="cl">  File <span class="dg">"C:\Users\Jhon\Downloads\API_prueba.py"</span>, line <span class="dg">259</span>, in <span class="dm">&lt;module&gt;</span></div><div class="cl">    consumoCombustible=consult.request_data("ConsCombAprox", 0, (dt.date.today() -</div><div class="cl">dt.timedelta(days=5)), dt.date.today())</div><div class="cl"></div><div class="cl"><b class="cc">  File </b><b class="cgr">"C:\Users\Jhon\Ministerio de Minas y Energía\Dirección de Energía Eléctrica</b></div><div class="cl"><b class="cgr">- DEE_GestionSE - Documentos\DEE_GestionSE\GSEC\1. Monitoreo del sector\POWERBI</b></div><div class="cl"><b class="cgr">GSEC\API XM\API.py"</b><b class="cc">, line </b><b class="cgr">121</b><b class="cc">, in </b><b class="cm">request_data</b></div><div class="cl"><b class="cy">    temporal_data = pd.json_normalize(data_json['Items'], 'HourlyEntities',</b></div><div class="cl"><b class="cy">'Date', sep='_')</b></div><div class="cl"></div><div class="cl"><b class="cr">KeyError</b><b class="cr2">:</b> 'Items'</div><div class="cl"></div><div class="cl"></div><div class="cl"><b class="cin">In [</b><b class="cin2">14</b><b class="cin">]:</b> runfile(<i>'C:/Users/Jhon/Downloads/API_prueba.py'</i>, wdir=<i>'C:/Users/Jhon/</i></div><div class="cl"><i>Downloads'</i>)</div><div class="cl">Traceback <span class="cc2">(most recent call last)</span>:</div><div class="cl"></div><div class="cl">  File <span class="dg">"C:\Users\Jhon\Downloads\API_prueba.py"</span>, line <span class="dg">239</span>, in <span class="dm">&lt;module&gt;</span></div><div class="cl">    consumoCombustibleMBTU=consult.request_data("ConsCombustibleMBTU", 0,</div><div class="cl">(dt.date.today() - dt.timedelta(days=5)), dt.date.today())</div><div class="cl"></div><div class="cl"><b class="cc">  File </b><b class="cgr">"C:\Users\Jhon\Downloads\API_prueba.py"</b><b class="cc">, line </b><b class="cgr">121</b><b class="cc">, in </b><b class="cm">request_data</b></div><div class="cl"><b class="cy">    temporal_data = pd.json_normalize(data_json['Items'], 'HourlyEntities',</b></div><div class="cl"><b class="cy">'Date', sep='_')</b></div><div class="cl"></div><div class="cl"><b class="cr">KeyError</b><b class="cr2">:</b> 'Items'</div><div class="cl"></div><div class="cl"></div><div class="cl"><b class="cin">In [</b><b class="cin2">15</b><b class="cin">]:</b> </div></div></div><div class="abs" style="left:484.5px;top:18px;width:6px;height:346px;background:#19232D"></div><div class="abs" style="left:485.2px;top:299px;width:4px;height:27px;background:#7B8790;border-radius:2px"></div><div class="btab sel" style="left:201.8px;top:363px;width:60.1px">IPython console</div><div class="btab" style="left:263px;top:363px;width:27.9px">History</div></div>
<div id="status"><span style="left:851.5px">LSP Python: ready</span><span style="left:942.0px">conda: base (Python 3.8.3)</span><span style="left:1055.8px">Line 239, Col 124</span><span style="left:1134.7px">UTF-8</span><span style="left:1174.5px">LF</span><span style="left:1200.0px">RW</span><span style="left:1231.0px">Mem 43%</span><svg class="abs" style="left:841.5px;top:5px" width="5" height="5" viewBox="0 0 5 5"><path d="M4 1.4A1.8 1.8 0 1 0 4.4 3" fill="none" stroke="#AEB5BB" stroke-width=".8"/></svg><svg class="abs" style="left:932px;top:5px" width="5" height="5" viewBox="0 0 5 5"><circle cx="2.5" cy="2.5" r="1.7" fill="none" stroke="#AEB5BB" stroke-width="1"/></svg></div>
<div id="taskbar"><svg class="abs" style="left:13px;top:9px" width="12" height="12" viewBox="0 0 12 12"><path d="M0 1.7L4.9 1V5.7H0Z M5.6 .9L12 0V5.7H5.6Z M0 6.4H4.9V11L0 10.3Z M5.6 6.4H12V12L5.6 11.1Z" fill="#F4F4F4"/></svg><div class="abs" style="left:37px;top:-.3px;width:259px;height:30.3px;background:#F2F2F2;border-bottom:1px solid #B8B8B8"></div><svg class="abs" style="left:46px;top:8px" width="13" height="13" viewBox="0 0 13 13"><circle cx="8" cy="5" r="3.9" fill="none" stroke="#333" stroke-width="1.1"/><path d="M5.2 7.8L.8 12.2" stroke="#333" stroke-width="1.2"/></svg><span class="abs" style="left:69.6px;top:8.6px;font-size:10.9px;letter-spacing:0;line-height:13px;color:#3A3A3A;white-space:nowrap">Escribe aquí para buscar</span><svg class="abs" style="left:306.6px;top:8.6px" width="15" height="12.4" viewBox="0 0 15 12.4"><path d="M.6 .2V12.2M10.6 .2V12.2M.6 2.8H10.6M.6 9.4H10.6" stroke="#8E979E" stroke-width="1.1" fill="none"/><rect x="2.6" y="4.6" width="6" height="3" fill="#56616A"/><path d="M13.6 1V12" stroke="#8E979E" stroke-width="1"/><circle cx="13.6" cy="4.4" r=".9" fill="#D0D4D8"/></svg><svg class="abs" style="left:343.5px;top:6px" width="17" height="17" viewBox="0 0 17 17"><circle cx="8.5" cy="8.5" r="8.2" fill="#1B74C9"/><path d="M1 10C1 4 5 1 9 1C13 1 16.6 4 16.4 8.4C16.3 10.6 14.6 11.6 12.6 11.6C10.8 11.6 10 10.8 10.6 9.8C11.2 8.8 10.4 6.4 8 6.4C5.4 6.4 3.6 8.6 4.4 11.6C5 14 7.2 16 10 16.4C4.6 17.4 1 14 1 10Z" fill="#39C1E8"/><path d="M4.6 11C5.4 14.4 9 16.6 12.6 15.4C14 14.8 15.2 13.8 15.8 12.6C13.6 13.8 9.6 13.6 8.6 10.6C8.2 9.2 8.8 8 9.8 7.6C7.4 6.6 3.8 8 4.6 11Z" fill="#1456A8"/><path d="M9 1C12 1 14.6 2.6 15.8 5.2C14 2.8 8.4 2.4 5.4 5.6C3.6 7.4 3.4 9.4 3.8 10.6C2.6 6.4 5 1.2 9 1Z" fill="#5FDC9A"/></svg><svg class="abs" style="left:381px;top:6px" width="17" height="17" viewBox="0 0 17 17"><path d="M8.6 .6A7.9 7.9 0 0 0 1.8 12.4L.6 16.6L5 15.4A7.9 7.9 0 1 0 8.6 .6Z" fill="#F4F4F4"/><path d="M8.6 1.9A6.6 6.6 0 0 0 3.1 12.2L2.4 14.8L5.1 14.1A6.6 6.6 0 1 0 8.6 1.9Z" fill="#30C350"/><path d="M6.2 4.8C5.8 4.8 5.2 5.4 5.2 6.4C5.2 8.4 8 11.6 10.6 11.8C11.6 11.8 12.2 11.2 12.2 10.6L10.6 9.6L9.8 10.2C8.8 9.8 7.6 8.6 7.2 7.6L7.8 6.8L7 4.9Z" fill="#F4F4F4"/></svg><svg class="abs" style="left:418.5px;top:6px" width="17" height="17" viewBox="0 0 17 17"><circle cx="8.5" cy="8.5" r="8.3" fill="#DB4437"/><path d="M8.5 8.5L1.4 4.2A8.3 8.3 0 0 0 7 16.7Z" fill="#0F9D58"/><path d="M8.5 8.5L7 16.7A8.3 8.3 0 0 0 16 5.2H8.5Z" fill="#FFCD40"/><path d="M1.4 4.2A8.3 8.3 0 0 1 16 5.2H8.5Z" fill="#DB4437"/><circle cx="8.5" cy="8.5" r="3.9" fill="#F4F4F4"/><circle cx="8.5" cy="8.5" r="3.1" fill="#4285F4"/></svg><svg class="abs" style="left:456px;top:7px" width="18" height="15" viewBox="0 0 18 15"><path d="M.6 2.4Q.6 1.4 1.6 1.4H6L7.4 2.8H16.4Q17.4 2.8 17.4 3.8V13Q17.4 14 16.4 14H1.6Q.6 14 .6 13Z" fill="#F5B93A"/><path d="M.6 5.2H17.4V13Q17.4 14 16.4 14H1.6Q.6 14 .6 13Z" fill="#FBD768"/><path d="M4.6 9H13.4V14H4.6Z" fill="#3A8EDB"/><path d="M6.4 11H11.6V14H6.4Z" fill="#F4F4F4"/></svg><div class="abs" style="left:493px;top:6px;width:18.4px;height:18px;background:#0B0B0B;border:1px solid #D8D8D8;color:#F4F4F4;font-size:10.6px;line-height:16px;text-align:center;letter-spacing:-.4px"><span style="color:#B8B8B8">D</span><b>x</b></div><div class="abs" style="left:531px;top:5px;width:17px;height:20px;font-size:5.2px;line-height:5.6px;font-weight:bold;text-align:center;color:#40E0E0">ATP<div style="background:#C050C0;color:#fff;height:8px;margin:0 2px;border:1px solid #F0F060;line-height:6px">LINE</div><span style="color:#F0F020">DRAW</span></div><svg class="abs" style="left:567.5px;top:6px" width="19" height="17" viewBox="0 0 19 17"><path d="M.4 10.4L5.6 7.4L9 3.4Q11 .6 12 .6Q13.4 2.6 18.6 14.6Q15.6 12.2 13.2 15.6Q11.6 17.2 9.8 14.8L6.4 11.8L4 13.2Z" fill="#E8702A"/><path d="M.4 10.4L5.6 7.4L7.6 9L4 13.2Z" fill="#3E7FBF"/><path d="M5.6 7.4L9 3.4Q11 .6 12 .6Q10.4 4 7.6 9Z" fill="#5FB0D8"/><path d="M12 .6Q13.4 2.6 18.6 14.6Q15.6 12.2 13.2 15.6Q13 8 12 .6Z" fill="#B8341C"/></svg><svg class="abs" style="left:605px;top:6.4px" width="18" height="16" viewBox="0 0 18 16"><rect x=".4" y=".4" width="17.2" height="15.2" rx="2" fill="#6A5FB0"/><path d="M2 3.6H16M2 6.8H16M2 10H16" stroke="#D8D4F0" stroke-width="1.3"/><path d="M4 11V14M7 9V14M10 11V14M13 8V14" stroke="#2A2660" stroke-width="1.2"/></svg><div class="abs" style="left:642.4px;top:6px;width:18px;height:18px;background:#B41C1C;border-radius:3px;color:#fff;font-size:9.6px;font-weight:bold;line-height:14px;text-align:center;letter-spacing:-.5px">SW</div><svg class="abs" style="left:679.4px;top:5.6px" width="19" height="19" viewBox="0 0 19 19"><rect x="0" y="0" width="19" height="19" fill="#1E5CB0"/><circle cx="9.5" cy="9.5" r="7" fill="none" stroke="#F4F4F4" stroke-width="2"/><path d="M4 7Q8 3 11 6Q9 10 5 11Z" fill="#F4F4F4" opacity=".8"/></svg><div class="abs" style="left:717px;top:5.6px;width:18.4px;height:19px;background:#F4F0F0;color:#C0202A;font-size:19px;font-weight:bold;line-height:20px;text-align:center">A</div><svg class="abs" style="left:755px;top:6.4px" width="17" height="17" viewBox="0 0 17 17"><circle cx="8.5" cy="8.5" r="8.4" fill="#17A1A5"/><path d="M8.5 8.5C7 5.8 3.4 5.8 3.4 8.5C3.4 11.2 7 11.2 8.5 8.5C10 5.8 13.6 5.8 13.6 8.5C13.6 11.2 10 11.2 8.5 8.5Z" fill="none" stroke="#F4F4F4" stroke-width="1.4"/></svg><svg class="abs" style="left:792px;top:5.4px" width="16" height="19" viewBox="0 0 16 19"><rect x="9.6" y=".4" width="5.8" height="18.2" rx="1" fill="#F2C811"/><rect x="5" y="5.6" width="5.8" height="13" rx="1" fill="#E8A80C"/><rect x=".6" y="10.4" width="5.6" height="8.2" rx="1" fill="#F6D751"/></svg><svg class="abs" style="left:827.5px;top:6.4px" width="18" height="16" viewBox="0 0 18 16"><rect x="5" y=".4" width="12.6" height="15.2" rx="1.2" fill="#21A366"/><rect x="11.3" y=".4" width="6.3" height="7.6" fill="#33C481"/><rect x="5" y="8" width="6.3" height="7.6" fill="#107C41"/><rect x=".4" y="3.6" width="9.4" height="9" rx="1" fill="#107C41"/></svg><span class="abs" style="left:829.6px;top:10.4px;font-size:7.4px;line-height:8px;font-weight:bold;color:#fff">X</span><svg class="abs" style="left:866.4px;top:5.4px" width="18" height="18" viewBox="0 0 18 18"><path d="M9.0 17.2L2.3 14.0L0.6 6.7L5.3 0.9L12.7 0.9L17.4 6.7L15.7 14.0Z" fill="none" stroke="#D4D8D8" stroke-width="1"/><path d="M9 8.6L9.0 17.2M9 8.6L2.3 14.0M9 8.6L0.6 6.7M9 8.6L5.3 0.9M9 8.6L12.7 0.9M9 8.6L17.4 6.7M9 8.6L15.7 14.0" stroke="#D4D8D8" stroke-width=".8" fill="none"/><path d="M9.0 13.2L5.4 11.5L4.5 7.6L7.0 4.5L11.0 4.5L13.5 7.6L12.6 11.5Z" fill="#33383C" stroke="#D4D8D8" stroke-width=".7"/><path d="M3.2 6.2H14.8L13.6 10.6H4.4Z" fill="#D41A1A"/><path d="M5.6 9.6L7.4 6.8L9 9L10.8 7L12.6 9.6" stroke="#F8E6E6" stroke-width=".8" fill="none"/></svg><div class="abs" style="left:375.0px;top:28.4px;width:29.6px;height:1.6px;background:#F2D8B8"></div><div class="abs" style="left:412.0px;top:28.4px;width:30.0px;height:1.6px;background:#F2D8B8"></div><div class="abs" style="left:450.0px;top:28.4px;width:29.5px;height:1.6px;background:#F2D8B8"></div><div class="abs" style="left:860.2px;top:28px;width:30.4px;height:2px;background:#FAE2C4"></div><svg class="abs" style="left:1076.5px;top:12px" width="10" height="6" viewBox="0 0 10 6"><path d="M.8 5.4L5 1L9.2 5.4" stroke="#F4F4F4" stroke-width="1" fill="none"/></svg><svg class="abs" style="left:1092.6px;top:10.6px" width="13" height="9" viewBox="0 0 13 9"><rect x="1.6" y="2" width="10" height="5.6" fill="none" stroke="#F4F4F4" stroke-width="1"/><rect x="3" y="3.2" width="5" height="3.2" fill="#F4F4F4"/><path d="M0 .6H4.4V4H0Z" fill="#F4F4F4"/><path d="M12.2 3.6V6" stroke="#F4F4F4"/></svg><svg class="abs" style="left:1111.6px;top:10px" width="10" height="10" viewBox="0 0 10 10"><path d="M1 9.4A8.4 8.4 0 0 1 9.4 1" stroke="#9AA3AB" stroke-width="1" fill="none"/><path d="M3.6 9.4A5.8 5.8 0 0 1 9.4 3.6" stroke="#9AA3AB" stroke-width="1" fill="none"/><path d="M6.2 9.4A3.2 3.2 0 0 1 9.4 6.2" stroke="#9AA3AB" stroke-width="1" fill="none"/><circle cx="8.8" cy="8.8" r=".9" fill="#9AA3AB"/></svg><svg class="abs" style="left:1126.4px;top:10px" width="12" height="10" viewBox="0 0 12 10"><path d="M.4 3.4H2.6L5.4 .8V9.2L2.6 6.6H.4Z" fill="none" stroke="#9AA3AB" stroke-width=".9"/><path d="M7 3Q8.2 5 7 7M8.6 1.8Q10.6 5 8.6 8.2M10.2 .8Q12.8 5 10.2 9.2" stroke="#7E8790" stroke-width=".8" fill="none"/></svg><span class="abs tk" style="left:1162.8px;top:10px;font-size:8.4px;letter-spacing:-.45px">ESP</span><span class="abs tk" style="left:1192.8px;top:4px">6:35 p. m.</span><span class="abs tk" style="left:1189px;top:18px;font-size:9.4px">19/03/2021</span><svg class="abs" style="left:1249px;top:9px" width="12" height="11.4" viewBox="0 0 14 13"><path d="M.8 .8H13.2V9.6H7.6L5 12.2V9.6H.8Z" fill="none" stroke="#F4F4F4" stroke-width="1.1"/></svg><div class="abs" style="left:1275.4px;top:0;width:1px;height:30px;background:#454D55"></div></div>
<div class="abs" style="left:1254px;top:12.4px;width:26px;height:13.2px;background:#FFFFE6;border:1px solid #8A8A7A;border-right:none;font-size:8.4px;letter-spacing:-.25px;line-height:11.6px;color:#4A4A4A;padding-left:.8px;padding-top:1.2px;z-index:9;white-space:nowrap;overflow:hidden">Cerrar</div>
</body></html>
